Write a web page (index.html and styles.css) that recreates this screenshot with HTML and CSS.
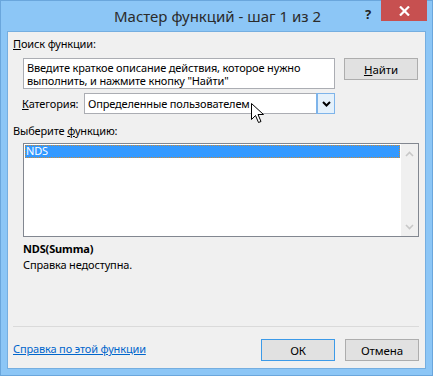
FILE: index.html
```html
<!DOCTYPE html>
<html lang="ru">
<head>
<meta charset="UTF-8" />
<title>Мастер функций - шаг 1 из 2</title>
<link rel="stylesheet" href="styles.css">
</head>
<body>
<div class="window">
  <div class="titlebar">
    <div class="title">Мастер функций - шаг 1 из 2</div>
    <div class="help">?</div>
    <div class="close">
      <svg width="11" height="10" viewBox="0 0 11 10"><path d="M1 0.5 L10 9.5 M10 0.5 L1 9.5" stroke="#fff" stroke-width="2.2"/></svg>
    </div>
  </div>
  <div class="client">
    <div class="label"><u>П</u>оиск функции:</div>
    <div class="search-row">
      <div class="search-box">Введите краткое описание действия, которое нужно выполнить, и нажмите кнопку "Найти"</div>
      <button class="btn"><u>Н</u>айти</button>
    </div>
    <div class="cat-row">
      <span class="cat-label"><u>К</u>атегория:</span>
      <div class="select">
        <span class="select-text">Определенные пользователем</span>
        <span class="select-btn">
          <svg width="9" height="6" viewBox="0 0 9 6"><path d="M1 1 L4.5 4.5 L8 1" stroke="#000" stroke-width="2" fill="none"/></svg>
        </span>
      </div>
    </div>
    <div class="label label-list">Выберите <u>ф</u>ункцию:</div>
    <div class="listbox">
      <div class="list-items">
        <div class="list-item selected">NDS</div>
      </div>
      <div class="scrollbar">
        <svg width="9" height="6" viewBox="0 0 9 6"><path d="M1 5 L4.5 1.5 L8 5" stroke="#c8c8c8" stroke-width="1.6" fill="none"/></svg>
        <svg width="9" height="6" viewBox="0 0 9 6"><path d="M1 1 L4.5 4.5 L8 1" stroke="#c8c8c8" stroke-width="1.6" fill="none"/></svg>
      </div>
    </div>
    <div class="func-name">NDS(Summa)</div>
    <div class="func-desc">Справка недоступна.</div>
    <div class="spacer"></div>
    <div class="separator"></div>
    <div class="bottom-row">
      <a class="help-link" href="#">Справка по этой функции</a>
      <div class="buttons">
        <button class="btn btn-default">ОК</button>
        <button class="btn">Отмена</button>
      </div>
    </div>
    <svg class="cursor" width="14" height="22" viewBox="0 0 14 22">
      <path d="M0.5 0.5 L0.5 16.5 L4.5 12.5 L7.5 19.5 L10 18.5 L7 11.5 L12.5 11.5 Z" fill="#fff" stroke="#000" stroke-width="1"/>
    </svg>
  </div>
</div>
</body>
</html>
```

FILE: styles.css
```css
* { box-sizing: border-box; }
html, body {
  margin: 0; padding: 0;
  width: 433px; height: 376px;
  overflow: hidden;
  font-family: "Noto Sans", "Open Sans", sans-serif;
  font-size: 11px;
  letter-spacing: -0.15px;
  color: #000;
}
.window {
  width: 433px; height: 376px;
  background: #8cc6f6;
  border: 1px solid #6aa6dc;
  display: flex; flex-direction: column;
}
/* Title bar */
.titlebar {
  position: relative;
  height: 30px;
  flex: none;
}
.title {
  text-align: center;
  font-size: 15px;
  letter-spacing: 0;
  line-height: 30px;
  color: #2b2b2b;
  padding-left: 2px;
}
.help {
  position: absolute;
  left: 364px; top: 4px;
  font-weight: bold;
  font-size: 13px;
  color: #222;
}
.close {
  position: absolute;
  left: 380px; top: -1px;
  width: 46px; height: 21px;
  background: #c75050;
  display: flex; align-items: center; justify-content: center;
}
/* Client area */
.client {
  position: relative;
  flex: 1;
  margin: 0 6px 6px;
  background: #f0f0f0;
  border: 1px solid #75aee0;
  padding: 4px 6px 7px 5px;
  display: flex; flex-direction: column;
  line-height: 15px;
}
.label { height: 15px; }
.search-row {
  display: flex;
  align-items: flex-start;
  gap: 9px;
  margin: 7px 0 0 10px;
}
.search-box {
  width: 312px; height: 31px;
  background: #fff;
  border: 1px solid #abadb3;
  padding: 2px 3px 0;
  line-height: 13px;
  color: #000;
}
.btn {
  width: 74px; height: 22px;
  background: #e1e1e1;
  border: 1px solid #adadad;
  font-family: inherit;
  font-size: 11.5px;
  letter-spacing: -0.1px;
  color: #000;
  padding: 0;
}
.btn-default { border-color: #3c9ae8; }
.cat-row {
  display: flex;
  align-items: center;
  margin: 4px 0 0 9px;
  height: 21px;
}
.cat-label { width: 62px; }
.select {
  width: 251px; height: 21px;
  background: #fff;
  border: 1px solid #abadb3;
  display: flex; align-items: center;
}
.select-text { flex: 1; padding-left: 3px; }
.select-btn {
  width: 17px; height: 19px;
  background: #e5f1fb;
  border-left: 1px solid #7eb4ea;
  outline: 1px solid #7eb4ea;
  display: flex; align-items: center; justify-content: center;
}
.label-list { margin-top: 9px; }
.listbox {
  display: flex;
  margin: 5px 0 0 10px;
  width: 396px; height: 94px;
  background: #fff;
  border: 1px solid #828790;
}
.list-items { flex: 1; padding: 1px; }
.list-item { height: 13px; line-height: 12px; padding-left: 1px; }
.list-item.selected {
  background: #3399ff;
  color: #fff;
  outline: 1px dotted #c88a3a;
  outline-offset: -1px;
}
.scrollbar {
  width: 17px;
  background: #f0f0f0;
  display: flex; flex-direction: column; justify-content: space-between; align-items: center;
  padding: 7px 0 6px;
}
.func-name {
  font-weight: bold;
  margin: 4px 0 0 10px;
}
.func-desc { margin: 1px 0 0 10px; }
.spacer { flex: 1; }
.separator {
  height: 1px;
  background: #dadada;
}
.bottom-row {
  display: flex;
  align-items: center;
  justify-content: space-between;
  margin-top: 12px;
}
.help-link {
  color: #0066cc;
  text-decoration: underline;
  margin-top: -3px;
}
.buttons { display: flex; gap: 10px; }
.cursor {
  position: absolute;
  left: 243px; top: 71px;
}
```
